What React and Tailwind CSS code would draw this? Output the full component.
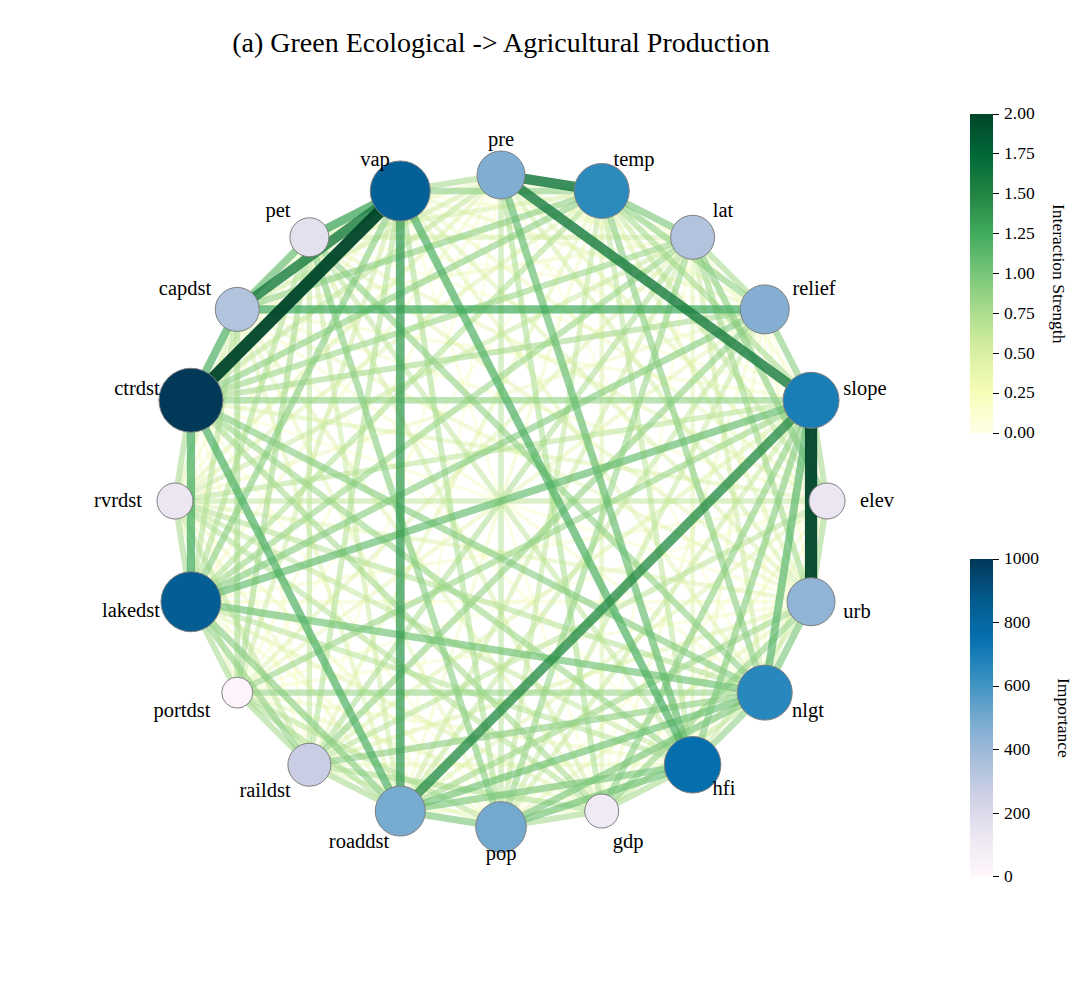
import React from 'react';

const YLGN = ['#ffffe5', '#f7fcb9', '#d9f0a3', '#addd8e', '#78c679', '#41ab5d', '#238443', '#006837', '#004529'];
const PUBU = ['#fff7fb', '#ece7f2', '#d0d1e6', '#a6bddb', '#74a9cf', '#3690c0', '#0570b0', '#045a8d', '#023858'];

function hexToRgb(h) {
  const n = parseInt(h.slice(1), 16);
  return [(n >> 16) & 255, (n >> 8) & 255, n & 255];
}

function cmap(stops, t) {
  const v = Math.max(0, Math.min(1, t)) * (stops.length - 1);
  const i = Math.min(stops.length - 2, Math.floor(v));
  const f = v - i;
  const a = hexToRgb(stops[i]);
  const b = hexToRgb(stops[i + 1]);
  const c = a.map((x, k) => Math.round(x + (b[k] - x) * f));
  return `rgb(${c[0]},${c[1]},${c[2]})`;
}

function mulberry32(seed) {
  let a = seed;
  return () => {
    a |= 0;
    a = (a + 0x6d2b79f5) | 0;
    let t = Math.imul(a ^ (a >>> 15), 1 | a);
    t = (t + Math.imul(t ^ (t >>> 7), 61 | t)) ^ t;
    return ((t ^ (t >>> 14)) >>> 0) / 4294967296;
  };
}

// name, importance, radius, label x, label baseline
const NODES = [
  ['elev', 130, 18, 877, 507],
  ['slope', 700, 28, 865, 395],
  ['relief', 460, 24.5, 814, 295],
  ['lat', 340, 22, 723, 217],
  ['temp', 650, 27.5, 634, 166],
  ['pre', 470, 24, 501, 146],
  ['vap', 840, 30, 375, 166],
  ['pet', 160, 19.5, 278, 217],
  ['capdst', 340, 22, 185, 295],
  ['ctrdst', 1000, 32, 137, 395],
  ['rvrdst', 130, 18, 118, 507],
  ['lakedst', 850, 30, 131, 617],
  ['portdst', 20, 15.5, 182, 717],
  ['raildst', 270, 21.5, 265, 797],
  ['roaddst', 490, 25, 359, 848],
  ['pop', 500, 25.3, 501, 860],
  ['gdp', 100, 17, 628, 848],
  ['hfi', 760, 28.3, 724, 795],
  ['nlgt', 660, 27.5, 808, 717],
  ['urb', 430, 24, 857, 618],
];

// hand-read interactions; the rest is filled in below
const STRONG = {
  'vap-ctrdst': 2.0,
  'slope-urb': 1.95,
  'pre-temp': 1.5,
  'pre-slope': 1.45,
  'vap-capdst': 1.45,
  'slope-roaddst': 1.35,
  'vap-roaddst': 1.25,
  'vap-pet': 1.2,
  'capdst-relief': 1.15,
  'ctrdst-lakedst': 1.15,
  'vap-hfi': 1.1,
  'ctrdst-roaddst': 1.1,
  'capdst-ctrdst': 1.1,
  'slope-nlgt': 1.05,
  'pet-capdst': 1.0,
  'slope-lakedst': 1.0,
  'pre-hfi': 1.0,
  'lakedst-nlgt': 0.95,
  'roaddst-nlgt': 0.95,
  'pop-hfi': 0.95,
  'pop-nlgt': 0.9,
  'roaddst-hfi': 0.9,
  'ctrdst-nlgt': 0.85,
  'temp-lat': 0.9,
  'relief-lakedst': 0.85,
  'slope-ctrdst': 0.8,
  'roaddst-pop': 0.9,
  'lakedst-roaddst': 0.85,
  'lakedst-raildst': 0.8,
  'vap-temp': 0.8,
  'temp-relief': 0.8,
  'lat-ctrdst': 0.75,
  'slope-hfi': 0.85,
  'nlgt-urb': 0.9,
  'pre-pop': 0.6,
  'hfi-nlgt': 0.8,
  'ctrdst-hfi': 0.75,
  'lat-lakedst': 0.75,
  'relief-ctrdst': 0.7,
};

const CX = 501;
const CY = 501;
const R = 326;

const points = NODES.map((n, i) => {
  const a = (i * 18 * Math.PI) / 180;
  return { x: CX + R * Math.cos(a), y: CY - R * Math.sin(a) };
});

const edges = (() => {
  const rand = mulberry32(7);
  const list = [];
  for (let i = 0; i < NODES.length; i++) {
    for (let j = i + 1; j < NODES.length; j++) {
      const a = NODES[i][0];
      const b = NODES[j][0];
      let s = 0.1 + Math.pow(rand(), 1.5) * 0.75;
      const d = j - i;
      if (d === 1 || d === 19) s = Math.max(s, 0.7);
      const key = STRONG[`${a}-${b}`] ?? STRONG[`${b}-${a}`];
      if (key !== undefined) s = key;
      list.push({ i, j, s });
    }
  }
  return list.sort((p, q) => p.s - q.s);
})();

function Network() {
  return (
    <svg width="950" height="860" viewBox="0 80 950 860" className="shrink-0">
      <g strokeLinecap="butt">
        {edges.map((e) => (
          <line
            key={`${e.i}-${e.j}`}
            x1={points[e.i].x}
            y1={points[e.i].y}
            x2={points[e.j].x}
            y2={points[e.j].y}
            stroke={cmap(YLGN, e.s / 2 + 0.05)}
            strokeOpacity={Math.min(0.95, 0.3 + 0.36 * e.s)}
            strokeWidth={2.5 + 5 * e.s}
          />
        ))}
      </g>
      {NODES.map(([name, imp, r], i) => (
        <circle
          key={name}
          cx={points[i].x}
          cy={points[i].y}
          r={r}
          fill={cmap(PUBU, imp / 1000)}
          stroke="#7f7f7f"
          strokeWidth="1"
        />
      ))}
      <g fontFamily="'Liberation Serif', 'Times New Roman', serif" fontSize="20.5" fill="#000" textAnchor="middle">
        {NODES.map(([name, , , lx, ly]) => (
          <text key={name} x={lx} y={ly}>
            {name}
          </text>
        ))}
      </g>
    </svg>
  );
}

function Colorbar({ barClass, heightClass, ticks, label }) {
  return (
    <div className="flex items-center">
      <div className={`w-[23px] ${heightClass} ${barClass}`} />
      <div className={`${heightClass} flex flex-col justify-between`}>
        {ticks.map((t) => (
          <div key={t} className="h-0 flex items-center">
            <span className="w-[6px] h-px bg-black" />
            <span className="ml-[5px] text-[17.5px] leading-none text-black">{t}</span>
          </div>
        ))}
      </div>
      <div className="ml-[15px] [writing-mode:vertical-rl] text-[17.5px] leading-none text-black">{label}</div>
    </div>
  );
}

export default function App() {
  return (
    <div className="w-[1080px] h-[1003px] bg-white overflow-hidden font-['Liberation_Serif','Times_New_Roman',serif]">
      <div className="h-[80px] w-[1002px] pt-[29px] text-center text-[28px] leading-none text-black">
        (a) Green Ecological -&gt; Agricultural Production
      </div>
      <div className="flex">
        <Network />
        <div className="ml-[20px] pt-[34px] flex flex-col">
          <Colorbar
            heightClass="h-[319px]"
            barClass="bg-[linear-gradient(to_top,#ffffe5,#f7fcb9,#d9f0a3,#addd8e,#78c679,#41ab5d,#238443,#006837,#004529)]"
            ticks={['2.00', '1.75', '1.50', '1.25', '1.00', '0.75', '0.50', '0.25', '0.00']}
            label="Interaction Strength"
          />
          <div className="mt-[126px]">
            <Colorbar
              heightClass="h-[318px]"
              barClass="bg-[linear-gradient(to_top,#fff7fb,#ece7f2,#d0d1e6,#a6bddb,#74a9cf,#3690c0,#0570b0,#045a8d,#023858)]"
              ticks={['1000', '800', '600', '400', '200', '0']}
              label="Importance"
            />
          </div>
        </div>
      </div>
    </div>
  );
}
